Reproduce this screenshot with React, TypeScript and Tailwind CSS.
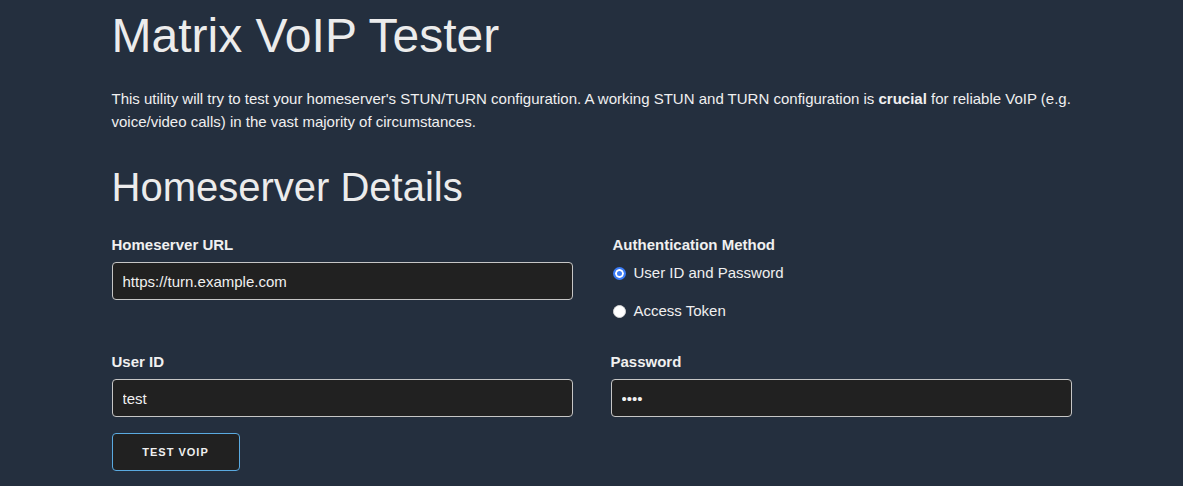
import { useState } from 'react';

export default function App() {
  const [homeserver, setHomeserver] = useState('https://turn.example.com');
  const [authMethod, setAuthMethod] = useState<'password' | 'token'>('password');
  const [userId, setUserId] = useState('test');
  const [password, setPassword] = useState('test');

  return (
    <div className="min-h-screen bg-[#242f3e] font-['Liberation_Sans',Arial,sans-serif] text-[#f0f0f0]">
      <div className="mx-auto w-[960px] pt-[12px] pb-[10px]">
        {/* Title */}
        <h1 className="text-[48px] leading-[48px] font-normal text-[#ececec]">Matrix VoIP Tester</h1>
        <p className="mt-[27px] text-[15px] leading-[23px]">
          This utility will try to test your homeserver's STUN/TURN configuration. A working STUN and TURN configuration
          is <b>crucial</b> for reliable VoIP (e.g. voice/video calls) in the vast majority of circumstances.
        </p>

        {/* Form */}
        <h2 className="mt-[34px] text-[40px] leading-[40px] font-normal text-[#ececec]">Homeserver Details</h2>

        <div className="mt-[29px] grid grid-cols-2 gap-x-[38px] gap-y-[23px]">
          <div>
            <label className="block text-[15px] leading-[18px] font-bold">Homeserver URL</label>
            <input
              type="text"
              value={homeserver}
              onChange={(e) => setHomeserver(e.target.value)}
              className="mt-[8px] block h-[38px] w-full rounded-[4px] border border-[#c6c6c6] bg-[#212121] px-[10px] text-[15px] text-[#f0f0f0] outline-none"
            />
          </div>

          <div className="pl-[2px]">
            <div className="text-[15px] leading-[18px] font-bold">Authentication Method</div>
            <label className="flex h-[38px] cursor-pointer items-center">
              <input
                type="radio"
                name="auth"
                checked={authMethod === 'password'}
                onChange={() => setAuthMethod('password')}
                className="h-[13px] w-[13px] appearance-none rounded-full border border-[#d6d6d6] bg-white checked:border-2 checked:border-[#3b7cf6] checked:bg-[#3b7cf6] checked:shadow-[inset_0_0_0_2px_#ffffff]"
              />
              <span className="ml-[8px] text-[15px]">User ID and Password</span>
            </label>
            <label className="flex h-[38px] cursor-pointer items-center">
              <input
                type="radio"
                name="auth"
                checked={authMethod === 'token'}
                onChange={() => setAuthMethod('token')}
                className="h-[13px] w-[13px] appearance-none rounded-full border border-[#d6d6d6] bg-white checked:border-2 checked:border-[#3b7cf6] checked:bg-[#3b7cf6] checked:shadow-[inset_0_0_0_2px_#ffffff]"
              />
              <span className="ml-[8px] text-[15px]">Access Token</span>
            </label>
          </div>

          <div>
            <label className="block text-[15px] leading-[18px] font-bold">User ID</label>
            <input
              type="text"
              value={userId}
              onChange={(e) => setUserId(e.target.value)}
              className="mt-[8px] block h-[38px] w-full rounded-[4px] border border-[#c6c6c6] bg-[#212121] px-[10px] text-[15px] text-[#f0f0f0] outline-none"
            />
          </div>

          <div>
            <label className="block text-[15px] leading-[18px] font-bold">Password</label>
            <input
              type="password"
              value={password}
              onChange={(e) => setPassword(e.target.value)}
              className="mt-[8px] block h-[38px] w-full rounded-[4px] border border-[#c6c6c6] bg-[#212121] px-[10px] text-[15px] text-[#f0f0f0] outline-none"
            />
          </div>
        </div>

        <button className="mt-[16px] h-[38px] w-[128px] rounded-[4px] border border-[#5aaae0] bg-[#212121] text-[11px] font-bold tracking-[1px] text-[#f0f0f0]">
          TEST VOIP
        </button>
      </div>
    </div>
  );
}
